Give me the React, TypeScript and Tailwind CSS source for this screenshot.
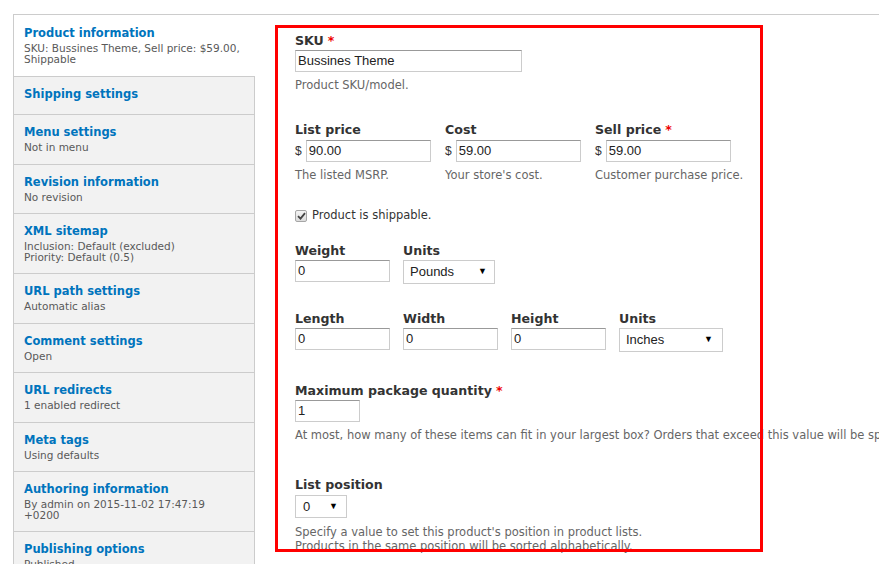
import React from 'react';

type Tab = { title: string; summary?: string[] };

const tabs: Tab[] = [
  { title: 'Product information', summary: ['SKU: Bussines Theme, Sell price: $59.00,', 'Shippable'] },
  { title: 'Shipping settings' },
  { title: 'Menu settings', summary: ['Not in menu'] },
  { title: 'Revision information', summary: ['No revision'] },
  { title: 'XML sitemap', summary: ['Inclusion: Default (excluded)', 'Priority: Default (0.5)'] },
  { title: 'URL path settings', summary: ['Automatic alias'] },
  { title: 'Comment settings', summary: ['Open'] },
  { title: 'URL redirects', summary: ['1 enabled redirect'] },
  { title: 'Meta tags', summary: ['Using defaults'] },
  { title: 'Authoring information', summary: ['By admin on 2015-11-02 17:47:19', '+0200'] },
  { title: 'Publishing options', summary: ['Published'] },
];

const font = { fontFamily: '"DejaVu Sans", Verdana, sans-serif' };

function Label({ children, required }: { children: React.ReactNode; required?: boolean }) {
  return (
    <div className="text-[12.6px] font-bold leading-[16px] text-[#333] whitespace-nowrap">
      {children}
      {required && <span className="ml-[4px] text-[#e00]">*</span>}
    </div>
  );
}

function Desc({ children, className = '' }: { children: React.ReactNode; className?: string }) {
  return <div className={`text-[11.5px] leading-[14px] text-[#666] whitespace-nowrap ${className}`}>{children}</div>;
}

function TextInput({ value, w }: { value: string; w: string }) {
  return (
    <div
      className={`${w} h-[22px] border border-[#ccc] border-t-[#999] bg-white pl-[2px] flex items-center text-[13px] text-[#222] font-['Liberation_Sans',Arial,sans-serif]`}
    >
      {value}
    </div>
  );
}

function Select({ value, w, h = 'h-[24px]', pl = 'pl-[6px]', pr = 'pr-[9px]' }: { value: string; w: string; h?: string; pl?: string; pr?: string }) {
  return (
    <div
      className={`${w} ${h} ${pl} ${pr} border border-[#ccc] bg-white flex items-center justify-between text-[13px] text-[#222] font-['Liberation_Sans',Arial,sans-serif]`}
    >
      <span>{value}</span>
      <span className="text-[9px] text-black">▼</span>
    </div>
  );
}

function PriceField({ label, value, desc, required }: { label: string; value: string; desc: string; required?: boolean }) {
  return (
    <div className="w-[150px]">
      <Label required={required}>{label}</Label>
      <div className="mt-[2px] flex items-center gap-[4px]">
        <span className="text-[12px] text-[#333] font-['Liberation_Sans',Arial,sans-serif]">$</span>
        <TextInput value={value} w="w-[125px]" />
      </div>
      <Desc className="mt-[6px]">{desc}</Desc>
    </div>
  );
}

export default function App() {
  return (
    <div className="relative w-[879px] h-[564px] overflow-hidden bg-white" style={font}>
      <div className="mt-[14px] ml-[13px] flex border-t border-l border-[#ccc] h-[560px]">
        {/* vertical tabs */}
        <ul className="w-[241px] shrink-0">
          {tabs.map((t, i) => {
            const pad = i === 0 ? 'pt-[10px] pb-[11px]' : !t.summary ? 'pt-[9px] pb-[12px]' : t.summary.length > 1 ? 'pt-[9px] pb-[10px]' : 'pt-[9px] pb-[10.5px]';
            return (
              <li
                key={t.title}
                className={`pl-[10px] ${pad} ${i === 0 ? 'bg-white' : 'bg-[#f2f2f2] border-t border-r border-[#ccc]'}`}
              >
                <div className="text-[11.5px] font-bold leading-[16px] text-[#0074bd]">{t.title}</div>
                {t.summary && (
                  <div className="mt-[2px] text-[10.5px] leading-[11px] text-[#595959]">
                    {t.summary.map((s) => (
                      <div key={s}>{s}</div>
                    ))}
                  </div>
                )}
              </li>
            );
          })}
        </ul>

        {/* product form */}
        <div className="pl-[40px] pt-[18px]">
          <Label required>SKU</Label>
          <div className="mt-[1px]">
            <TextInput value="Bussines Theme" w="w-[227px]" />
          </div>
          <Desc className="mt-[6px]">Product SKU/model.</Desc>

          <div className="mt-[30px] flex">
            <PriceField label="List price" value="90.00" desc="The listed MSRP." />
            <PriceField label="Cost" value="59.00" desc="Your store's cost." />
            <PriceField label="Sell price" value="59.00" desc="Customer purchase price." required />
          </div>

          <div className="mt-[26px] flex items-center gap-[5px] h-[16px]">
            <span className="w-[12px] h-[12px] rounded-[2px] border border-[#a6a6a6] bg-gradient-to-b from-[#f4f4f4] to-[#dcdcdc] flex items-center justify-center">
              <svg width="9" height="8" viewBox="0 0 9 8">
                <path d="M1 4.2 L3.5 6.6 L8 1.2" fill="none" stroke="#444" strokeWidth="1.8" />
              </svg>
            </span>
            <span className="text-[11.5px] text-[#333]">Product is shippable.</span>
          </div>

          <div className="mt-[19px] flex gap-[13px]">
            <div>
              <Label>Weight</Label>
              <div className="mt-[1px]">
                <TextInput value="0" w="w-[95px]" />
              </div>
            </div>
            <div>
              <Label>Units</Label>
              <div className="mt-[1px]">
                <Select value="Pounds" w="w-[92px]" pr="pr-[7px]" />
              </div>
            </div>
          </div>

          <div className="mt-[27px] flex gap-[13px]">
            {['Length', 'Width', 'Height'].map((l) => (
              <div key={l}>
                <Label>{l}</Label>
                <div className="mt-[1px]">
                  <TextInput value="0" w="w-[95px]" />
                </div>
              </div>
            ))}
            <div>
              <Label>Units</Label>
              <div className="mt-[1px]">
                <Select value="Inches" w="w-[104px]" />
              </div>
            </div>
          </div>

          <div className="mt-[31px]">
            <Label required>Maximum package quantity</Label>
          </div>
          <div className="mt-[1px]">
            <TextInput value="1" w="w-[65px]" />
          </div>
          <Desc className="mt-[6px]">
            At most, how many of these items can fit in your largest box? Orders that exceed this value will be split into multiple packages.
          </Desc>

          <div className="mt-[35px]">
            <Label>List position</Label>
          </div>
          <div className="mt-[2px]">
            <Select value="0" w="w-[52px]" h="h-[23px]" pl="pl-[7px]" pr="pr-[8px]" />
          </div>
          <Desc className="mt-[7px]">
            <div>Specify a value to set this product's position in product lists.</div>
            <div>Products in the same position will be sorted alphabetically.</div>
          </Desc>
        </div>
      </div>

      {/* highlight annotation */}
      <div className="absolute left-[275px] top-[25px] w-[488px] h-[527px] border-[3px] border-[#ff0000] pointer-events-none" />
    </div>
  );
}
